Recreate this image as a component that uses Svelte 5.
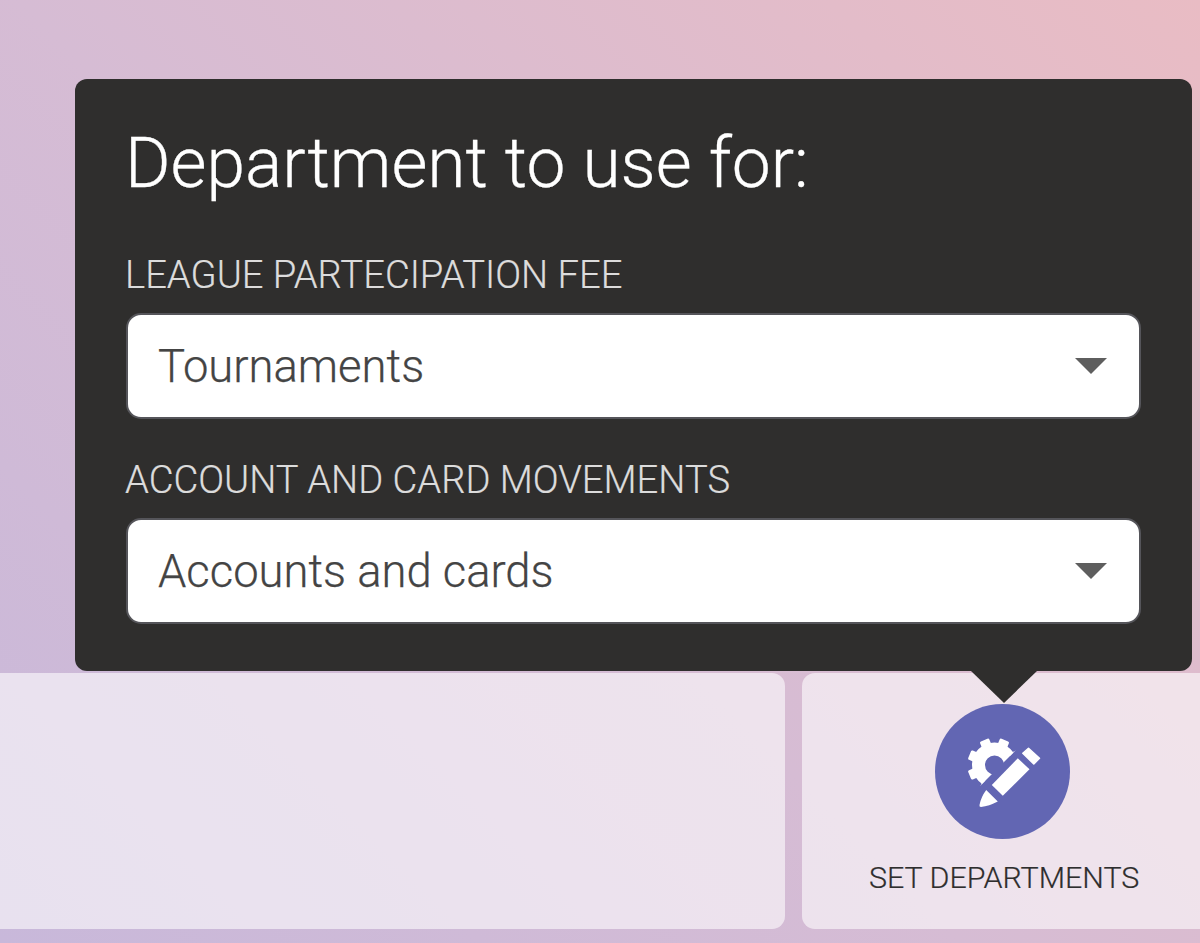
<script>
  const fields = [
    { label: 'LEAGUE PARTECIPATION FEE', value: 'Tournaments' },
    { label: 'ACCOUNT AND CARD MOVEMENTS', value: 'Accounts and cards' }
  ];
  const teeth = [0, 45, 90, 135, 180, 225, 270, 315];
</script>

<div class="page">
  <div class="cards">
    <div class="card wide"></div>
    <div class="card action">
      <div class="circle">
        <svg width="135" height="135" viewBox="0 0 135 135" aria-hidden="true">
          <defs>
            <clipPath id="gearcut"><polygon points="0,0 127,0 0,127" /></clipPath>
          </defs>
          <g clip-path="url(#gearcut)">
            <circle cx="59.5" cy="61" r="16" fill="none" stroke="#fff" stroke-width="13" />
            {#each teeth as a}
              <rect x="54.5" y="34" width="10" height="9" rx="1.5" fill="#fff" transform="rotate({a + 22.5} 59.5 61)" />
            {/each}
          </g>
          <polygon points="56.8,81 67.8,91.7 94.5,65.3 82.8,54.3" fill="#fff" />
          <polygon points="87.8,49.3 93.5,44.3 104.5,54.3 98.8,60" fill="#fff" stroke="#fff" stroke-width="1.5" stroke-linejoin="round" />
          <path d="M51.2 86 L62.8 97.5 Q54 102 46 103 Q44 103 44.5 101 Q46 93 51.2 86 Z" fill="#fff" />
        </svg>
      </div>
      <span class="caption">SET DEPARTMENTS</span>
    </div>
  </div>

  <div class="popover">
    <h1>Department to use for:</h1>
    {#each fields as f}
      <div class="field">
        <div class="label">{f.label}</div>
        <div class="select">
          <span>{f.value}</span>
          <i class="caret"></i>
        </div>
      </div>
    {/each}
    <i class="arrow"></i>
  </div>
</div>

<style>
  :global(body) {
    margin: 0;
    overflow: hidden;
  }
  .page {
    position: relative;
    height: 943px;
    width: 1200px;
    overflow: hidden;
    box-sizing: border-box;
    padding-top: 673px;
    font-family: Roboto, "Liberation Sans", sans-serif;
    background: linear-gradient(45deg, #c8b8da 0%, #d6bcd4 45%, #e9bcc4 100%);
  }
  .cards {
    display: grid;
    grid-template-columns: 805px 420px;
    gap: 17px;
    height: 256px;
    margin-left: -20px;
  }
  .card {
    background: rgba(255, 255, 255, 0.58);
    border-radius: 13px;
  }
  .action {
    display: flex;
    flex-direction: column;
    align-items: flex-start;
    padding-top: 31px;
    padding-left: 133px;
    box-sizing: border-box;
  }
  .circle {
    width: 135px;
    height: 135px;
    border-radius: 50%;
    background: #6266b3;
  }
  .circle svg {
    display: block;
  }
  .caption {
    margin-top: 21px;
    margin-left: -66px;
    font-size: 30.4px;
    line-height: 36px;
    font-weight: 300;
    color: #2e2e2e;
    white-space: nowrap;
    -webkit-text-stroke: 0.2px #2e2e2e;
  }
  .popover {
    position: absolute;
    left: 75px;
    top: 79px;
    width: 1117px;
    height: 592px;
    box-sizing: border-box;
    padding: 49px 51px 0;
    background: #2f2e2d;
    border-radius: 12px;
  }
  h1 {
    margin: 0 0 54px -1px;
    font-size: 69.5px;
    line-height: 72px;
    font-weight: 300;
    color: #fff;
    -webkit-text-stroke: 0.3px #fff;
  }
  .field {
    margin-bottom: 40px;
  }
  .label {
    font-size: 38.2px;
    line-height: 42px;
    font-weight: 300;
    color: #dcdcdc;
    margin: 0 0 18px -1px;
    -webkit-text-stroke: 0.2px #dcdcdc;
  }
  .select {
    display: flex;
    align-items: center;
    justify-content: space-between;
    height: 106px;
    box-sizing: border-box;
    padding: 0 32px 0 30px;
    margin-top: -1px;
    background: #fff;
    border: 2px solid #55555a;
    border-radius: 15px;
    font-size: 45.4px;
    font-weight: 300;
    color: #444;
    -webkit-text-stroke: 0.25px #444;
  }
  .caret {
    width: 0;
    height: 0;
    border-left: 16.5px solid transparent;
    border-right: 16.5px solid transparent;
    border-top: 16px solid #5e5e5e;
  }
  .arrow {
    position: absolute;
    left: 896px;
    top: 592px;
    width: 0;
    height: 0;
    border-left: 33px solid transparent;
    border-right: 33px solid transparent;
    border-top: 32px solid #2f2e2d;
  }
</style>
